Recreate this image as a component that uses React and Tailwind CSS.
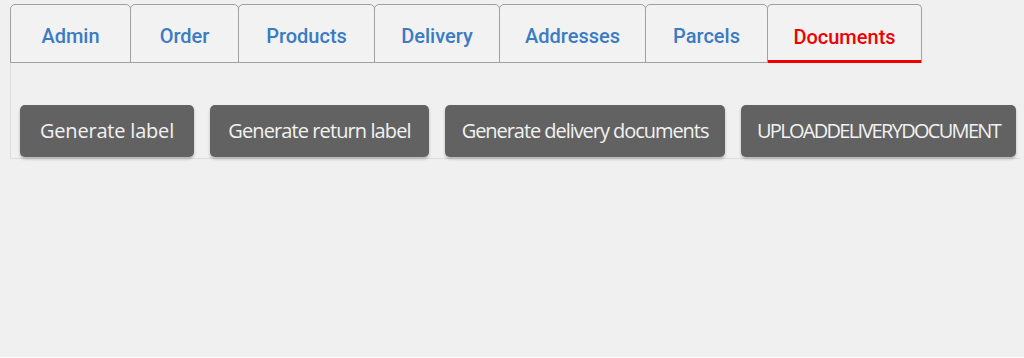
import React from "react";

const tabs = [
  { t: "Admin", w: "w-[121px]" },
  { t: "Order", w: "w-[109px]" },
  { t: "Products", w: "w-[137px]" },
  { t: "Delivery", w: "w-[126px]" },
  { t: "Addresses", w: "w-[147px]" },
  { t: "Parcels", w: "w-[123px]" },
  { t: "Documents", w: "w-[155px]" },
];
const buttons = [
  { t: "Generate label", w: "w-[174px]", ls: "tracking-[-0.2px]" },
  { t: "Generate return label", w: "w-[219px]", ls: "tracking-[-0.9px]" },
  { t: "Generate delivery documents", w: "w-[280px]", ls: "tracking-[-1.05px]" },
  { t: "UPLOADDELIVERYDOCUMENT", w: "w-[275px]", ls: "tracking-[-1.7px]" },
];

export default function App() {
  return (
    <div className="h-[357px] w-full bg-[#f0f0f0] pt-[4px]">
      <div className="flex pl-[10px]">
        {tabs.map((tab, i) => {
          const active = tab.t === "Documents";
          return (
            <div
              key={tab.t}
              className={`relative h-[59px] ${tab.w} shrink-0 flex items-center justify-center pt-[5px] rounded-t-[5px] border border-[#a0a0a0] bg-[#f2f2f2] ${i > 0 ? "-ml-px" : ""} ${active ? "border-b-0" : ""}`}
              style={{ fontFamily: "Roboto, sans-serif" }}
            >
              <span className={`text-[20px] font-medium ${active ? "text-[#f00000]" : "text-[#3a7bc2]"}`}>{tab.t}</span>
              {active && <div className="absolute left-0 right-0 bottom-0 h-[3px] bg-[#f00000]" />}
            </div>
          );
        })}
      </div>
      <div className="ml-[10px] mr-[4px] h-[96px] border-l border-b border-[#dcdcdc] flex items-start gap-[16px] pl-[9px] pt-[42px]">
        {buttons.map((b) => (
          <button
            key={b.t}
            className={`h-[52px] ${b.w} ${b.ls} shrink-0 rounded-[5px] bg-[#626262] text-[#f2f2f2] text-[20px] whitespace-nowrap shadow-[0_2px_3px_rgba(0,0,0,0.25)]`}
            style={{ fontFamily: "'Open Sans', sans-serif" }}
          >
            {b.t}
          </button>
        ))}
      </div>
    </div>
  );
}
